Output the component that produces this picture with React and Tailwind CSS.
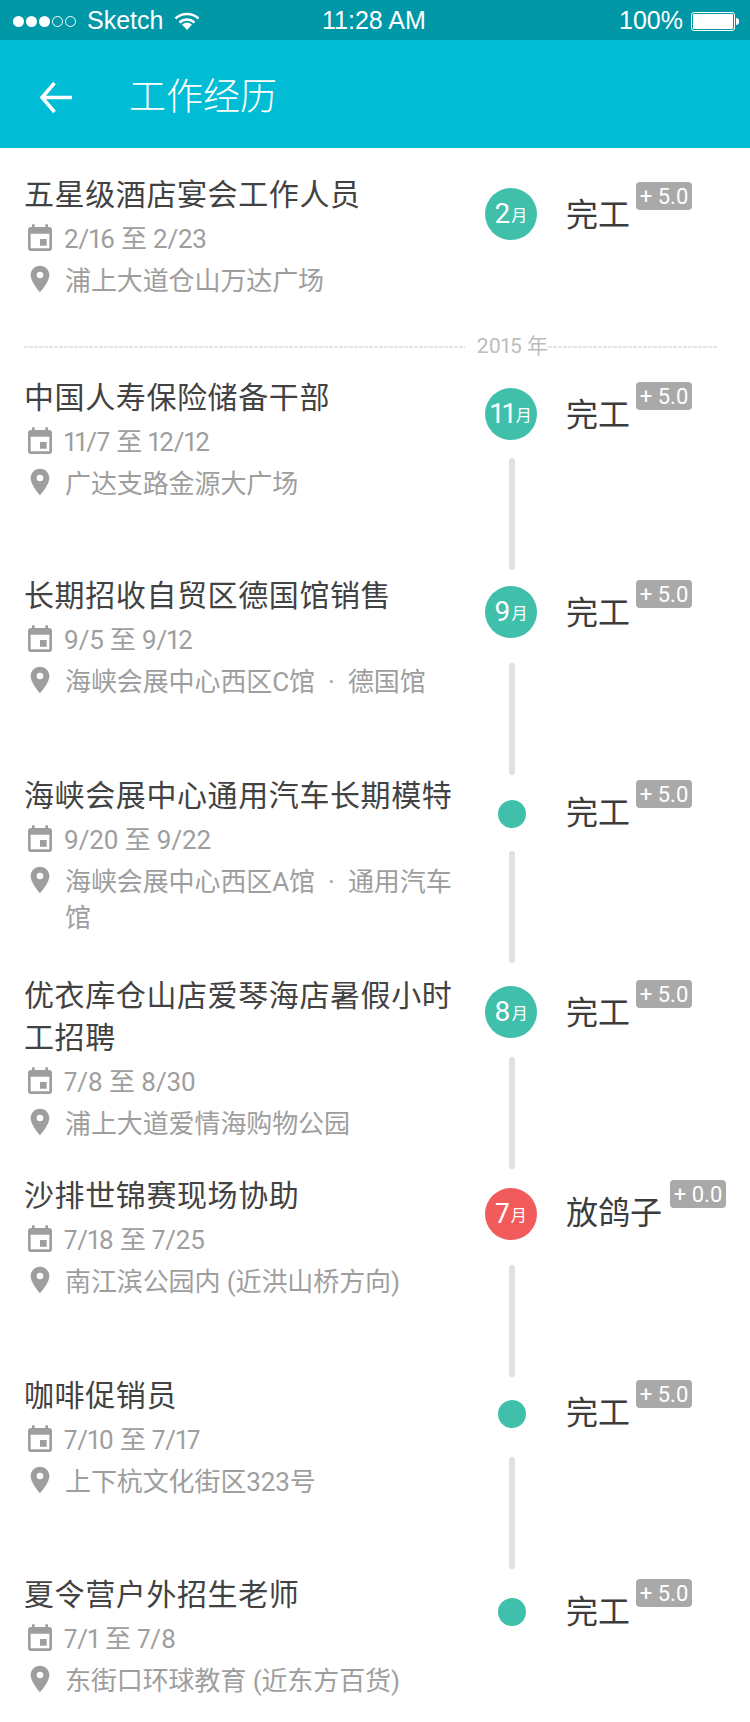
import React from 'react';

const rows = [
  { title: '中国人寿保险储备干部', date: '11/7 至 12/12', place: '广达支路金源大广场', month: '11', gap: 'mt-[18px]', height: 'h-[198px]', top: 'mt-[11px]' },
  { title: '长期招收自贸区德国馆销售', date: '9/5 至 9/12', place: '海峡会展中心西区C馆\u2002·\u2002德国馆', month: '9', gap: 'mt-[25px]', height: 'h-[200px]', top: 'mt-[11px]' },
  { title: '海峡会展中心通用汽车长期模特', date: '9/20 至 9/22', place: '海峡会展中心西区A馆\u2002·\u2002通用汽车馆', gap: 'mt-[11px]', height: 'h-[200px]', top: 'mt-[13px]' },
  { title: '优衣库仓山店爱琴海店暑假小时工招聘', date: '7/8 至 8/30', place: '浦上大道爱情海购物公园', month: '8', gap: 'mt-[19px]', height: 'h-[200px]', top: 'mt-[11px]' },
  { title: '沙排世锦赛现场协助', date: '7/18 至 7/25', place: '南江滨公园内 (近洪山桥方向)', month: '7', status: '放鸽子', score: '+ 0.0', red: true, gap: 'mt-[25px]', height: 'h-[200px]', top: 'mt-[13px]' },
  { title: '咖啡促销员', date: '7/10 至 7/17', place: '上下杭文化街区323号', gap: 'mt-[17px]', height: 'h-[199px]', top: 'mt-[13px]' },
  { title: '夏令营户外招生老师', date: '7/1 至 7/8', place: '东街口环球教育 (近东方百货)', height: 'h-[148px]', top: 'mt-[12px]' },
];

const CalendarIcon = () => (
  <svg width="32" height="32" viewBox="0 0 24 24" className="shrink-0 fill-[#9e9e9e]">
    <path d="M17 12h-5v5h5v-5zM16 1v2H8V1H6v2H5c-1.110 0-1.990.9-1.990 2L3 19c0 1.100.890 2 2 2h14c1.100 0 2-.9 2-2V5c0-1.100-.9-2-2-2h-1V1h-2zm3 18H5V8h14v11z" />
  </svg>
);

const PinIcon = () => (
  <svg width="32" height="32" viewBox="0 0 24 24" className="shrink-0 fill-[#9e9e9e]">
    <path d="M12 2C8.130 2 5 5.130 5 9c0 5.250 7 13 7 13s7-7.750 7-13c0-3.870-3.130-7-7-7zm0 9.500a2.500 2.500 0 0 1 0-5 2.500 2.500 0 0 1 0 5z" />
  </svg>
);

const Job = ({ row, first }) => (
  <div className={`flex ${first ? 'h-[181px] pt-[26px]' : row.height}`}>
    <div className="w-[460px] shrink-0 pl-[24px]">
      <h2 className="w-[436px] text-[30px] leading-[42px] tracking-[0.6px] text-[#424242]">{row.title}</h2>
      <div className="mt-[2px] flex h-[42px] items-center text-[26px] text-[#9e9e9e]">
        <CalendarIcon />
        <span className="ml-[8px] tracking-[-0.2px] [font-variant-numeric:proportional-nums]">{row.date}</span>
      </div>
      <div className="mt-[3px] flex items-start text-[26px] leading-[36px] text-[#9e9e9e]">
        <PinIcon />
        <span className="ml-[9px] w-[392px] tracking-[-0.1px] [font-variant-numeric:proportional-nums]">{row.place}</span>
      </div>
    </div>
    <div className="flex w-[102px] shrink-0 flex-col items-center">
      <div className={`flex h-[52px] items-center justify-center ${first ? 'mt-[14px]' : row.top}`}>
        {row.month ? (
          <div className={`flex h-[52px] w-[52px] items-center justify-center rounded-full text-white ${row.red ? 'bg-[#f25b5b]' : 'bg-[#40bfab]'}`}>
            <span className="text-[28px] leading-none [font-variant-numeric:proportional-nums]">{row.month}</span>
            <span className="ml-[1px] mt-[4px] text-[16px] leading-none">月</span>
          </div>
        ) : (
          <div className="ml-[2px] h-[28px] w-[28px] rounded-full bg-[#40bfab]" />
        )}
      </div>
      {row.gap && <div className={`ml-[2px] h-[112px] w-[6px] shrink-0 rounded-full bg-[#e0e0e0] ${row.gap}`} />}
    </div>
    <div className="flex items-start pl-[4px]">
      <span className={`text-[32px] leading-[44px] text-[#3c3c3c] ${first ? 'mt-[19px]' : 'mt-[16px]'}`}>{row.status || '完工'}</span>
      <span className={`flex h-[28px] w-[56px] items-center justify-center rounded-[4px] bg-[#a9a9a9] pt-[2px] text-[22px] leading-none text-white ${row.red ? 'ml-[8px]' : 'ml-[6px]'} ${first ? 'mt-[8px]' : 'mt-[5px]'}`}>{row.score || '+ 5.0'}</span>
    </div>
  </div>
);

export default function App() {
  return (
    <div className="h-[1722px] w-[750px] overflow-hidden bg-white font-['Roboto','Noto_Sans_CJK_SC',sans-serif]">
      <div className="relative flex h-[40px] items-center justify-between bg-[#0097a7] pl-[13px] pr-[11px] pt-[2px] font-['Liberation_Sans','Noto_Sans_CJK_SC',sans-serif] text-[25px] text-white">
        <div className="flex items-center">
          <div className="flex items-center gap-[2px]">
            <i className="h-[11px] w-[11px] rounded-full bg-white" />
            <i className="h-[11px] w-[11px] rounded-full bg-white" />
            <i className="h-[11px] w-[11px] rounded-full bg-white" />
            <i className="h-[11px] w-[11px] rounded-full border border-white" />
            <i className="h-[11px] w-[11px] rounded-full border border-white" />
          </div>
          <span className="ml-[11px]">Sketch</span>
          <svg width="26" height="18" viewBox="0 0 26 18" className="ml-[11px]" fill="none" stroke="white" strokeWidth="2.500">
            <path d="M1.500 6.500c6.500-6 16.500-6 23 0M5.500 10.500c4.500-4 10.500-4 15 0" />
            <path d="M13 18l-5-5.500c3-2.300 7-2.300 10 0z" fill="white" stroke="none" />
          </svg>
        </div>
        <span className="absolute left-[322px]">11:28 AM</span>
        <div className="flex items-center">
          <span>100%</span>
          <div className="ml-[8px] h-[19px] w-[44px] rounded-[3px] border border-white p-[1px]"><div className="h-full w-full rounded-[1px] bg-white" /></div>
          <div className="ml-[1px] h-[7px] w-[3px] rounded-r-sm bg-white" />
        </div>
      </div>
      <div className="flex h-[108px] items-center bg-[#00bcd4] pl-[39px] pt-[6px] text-white">
        <svg width="33" height="33" viewBox="0 0 33 33" fill="none" stroke="white" strokeWidth="3.500">
          <path d="M33 16.500H3M15.500 2L3 16.500 15.500 31" />
        </svg>
        <h1 className="ml-[57px] mt-[1px] text-[37px] font-light">工作经历</h1>
      </div>
      <Job first row={{ title: '五星级酒店宴会工作人员', date: '2/16 至 2/23', place: '浦上大道仓山万达广场', month: '2' }} />
      <div className="mb-[12px] flex h-[36px] items-center pl-[24px] pr-[32px] text-[21px] text-[#bdbdbd]">
        <div className="h-[2px] flex-1 bg-[repeating-linear-gradient(90deg,#e4e4e4_0_4px,transparent_4px_5px)]" />
        <span className="ml-[12px] [font-variant-numeric:proportional-nums]">2015 年</span>
        <div className="h-[2px] w-[170px] bg-[repeating-linear-gradient(90deg,#e4e4e4_0_4px,transparent_4px_5px)]" />
      </div>
      {rows.map((row) => <Job key={row.title} row={row} />)}
    </div>
  );
}
